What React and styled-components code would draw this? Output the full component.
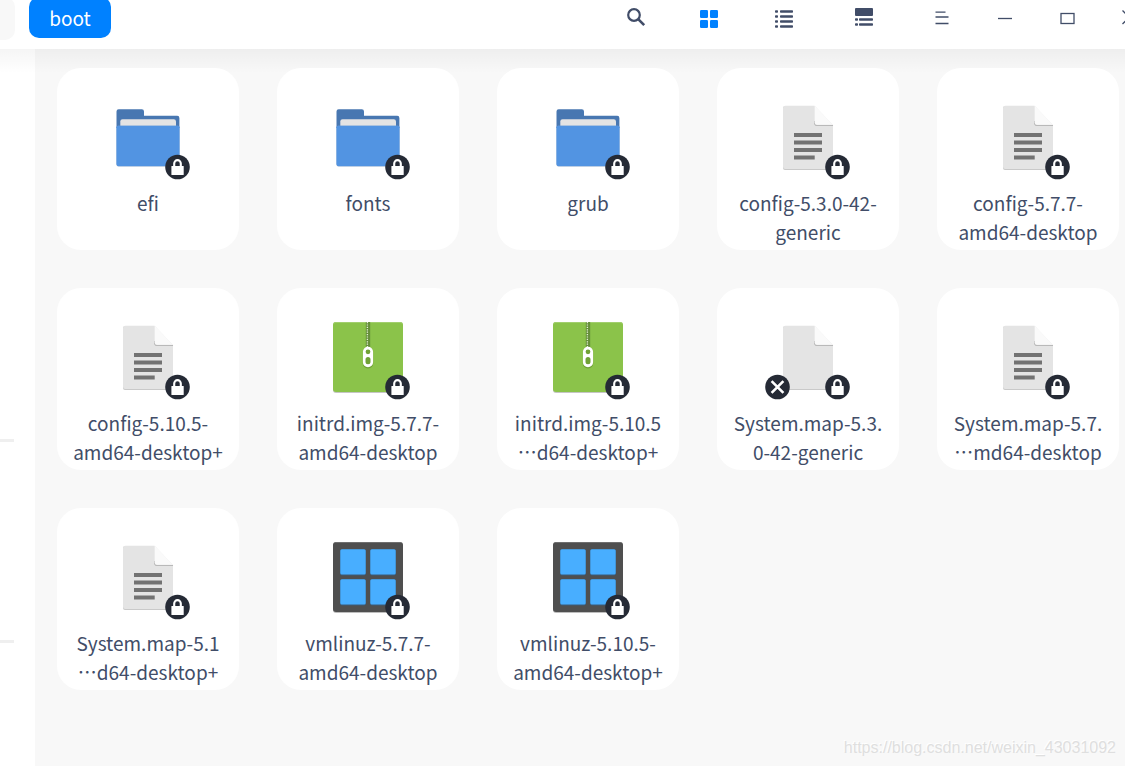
import React from "react";
import styled, { createGlobalStyle } from "styled-components";

const GlobalStyle = createGlobalStyle`
  * { box-sizing: border-box; }
  html, body, #root { height: 100%; }
  body {
    margin: 0;
    overflow: hidden;
    background: #ffffff;
    color: #414d68;
    font-family: "Noto Sans CJK SC", "Noto Sans", sans-serif;
    font-size: 19px;
  }
  button {
    border: 0;
    padding: 0;
    background: none;
    color: inherit;
    font: inherit;
    cursor: pointer;
  }
`;

const Window = styled.div`
  display: flex;
  flex-direction: column;
  min-height: 100%;
`;

const TitleBar = styled.header`
  display: flex;
  justify-content: space-between;
  height: 49px;
  flex: none;
  overflow: hidden;
  background: #ffffff;
`;

const Breadcrumbs = styled.nav`
  display: flex;
  gap: 14px;
  margin-top: -3px;
`;

const Crumb = styled.button`
  width: ${(p) => (p.$current ? "82px" : "15px")};
  height: ${(p) => (p.$current ? "41px" : "43px")};
  border-radius: ${(p) => (p.$current ? "10px" : "0 10px 10px 0")};
  background: ${(p) => (p.$current ? "#0081ff" : "#f8f8f8")};
  color: #ffffff;
`;

const Tools = styled.div`
  display: flex;
  height: 36px;
  margin-right: -36px;
`;

const ToolGroup = styled.div`
  display: flex;
  margin-right: ${(p) => (p.$spaced ? "3px" : "0")};
`;

const ToolButton = styled.button`
  display: grid;
  place-items: center;
  width: ${(p) => p.$width}px;
  color: ${(p) => (p.$active ? "#0081ff" : "#414d68")};
`;

const Body = styled.div`
  position: relative;
  display: flex;
  flex: 1;

  &::before {
    content: "";
    position: absolute;
    inset: 0 0 auto 0;
    height: 24px;
    background: linear-gradient(rgba(0, 0, 0, 0.04), rgba(0, 0, 0, 0));
    pointer-events: none;
  }
`;

const Sidebar = styled.aside`
  flex: none;
  width: 35px;
  padding-right: 21px;
  background: #ffffff;
`;

const SidebarSection = styled.div`
  height: ${(p) => p.$height}px;
  border-bottom: 3px solid #efefef;
`;

const Content = styled.main`
  flex: 1;
  padding: 19px 0 19px 22px;
  background: #f8f8f8;
`;

const FileGrid = styled.ul`
  display: grid;
  grid-template-columns: repeat(auto-fill, 182px);
  gap: 38px;
  margin: 0;
  padding: 0;
  list-style: none;
`;

const FileCard = styled.button`
  position: relative;
  z-index: 1;
  display: flex;
  flex-direction: column;
  align-items: center;
  gap: 8px;
  width: 100%;
  height: 182px;
  padding-top: 34px;
  border-radius: 24px;
  background: #ffffff;
`;

const FileName = styled.span`
  line-height: 29px;
  white-space: pre-line;
  text-align: center;
`;

const Watermark = styled.div`
  position: absolute;
  right: 9px;
  bottom: 8px;
  color: #dfdfdf;
  font-family: "Liberation Sans", sans-serif;
  font-size: 16px;
  line-height: 20px;
  text-shadow: -1px -1px 0 #ffffff;
`;

function ToolIcon({ name }) {
  return (
    <svg width="24" height="24" viewBox="0 0 24 24" fill="currentColor" aria-hidden="true">
      {name === "search" && (
        <g fill="none" stroke="currentColor">
          <circle cx="10" cy="9" r="5.8" strokeWidth="2.2" />
          <path d="M14.2 13.2L20.2 19.2" strokeWidth="2.6" />
        </g>
      )}
      {name === "grid" && (
        <>
          <rect x="3" y="4" width="8" height="8" rx="1.2" />
          <rect x="13" y="4" width="8" height="8" rx="1.2" />
          <rect x="3" y="14" width="8" height="8" rx="1.2" />
          <rect x="13" y="14" width="8" height="8" rx="1.2" />
        </>
      )}
      {name === "list" &&
        [4.2, 9.2, 14.2, 19.2].map((y) => (
          <g key={y}>
            <rect x="3" y={y} width="3" height="2.6" rx="0.8" />
            <rect x="8" y={y} width="13" height="2.6" rx="0.8" />
          </g>
        ))}
      {name === "details" && (
        <>
          <rect x="3" y="2" width="18" height="8" rx="1" />
          {[12.2, 17.2].map((y) => (
            <g key={y}>
              <rect x="3" y={y} width="3" height="2.6" rx="0.8" />
              <rect x="7" y={y} width="14" height="2.6" rx="0.8" />
            </g>
          ))}
        </>
      )}
      {name === "menu" && (
        <path d="M6.5 6.1H16.5M6.5 11H19.5M6.5 17.5H19.5" fill="none" stroke="currentColor" strokeWidth="1.3" />
      )}
      {name === "minimize" && (
        <path d="M6 12.5H20" fill="none" stroke="currentColor" strokeWidth="1.3" />
      )}
      {name === "maximize" && (
        <rect x="6" y="7.5" width="13" height="10" fill="none" stroke="currentColor" strokeWidth="1.3" />
      )}
      {name === "close" && (
        <path d="M4.5 4.5L18 18M18 4.5L4.5 18" fill="none" stroke="currentColor" strokeWidth="1.3" />
      )}
    </svg>
  );
}

function Folder() {
  return (
    <>
      <path d="M18.5 26V9.5Q18.5 7.3 20.7 7.3H43.8Q46 7.3 46 9.5V13.7H79.2Q81.4 13.7 81.4 16V26Z" fill="#4877b1" />
      <path d="M22.3 27V19.5Q22.3 17.3 24.5 17.3H75.8Q78 17.3 78 19.5V27Z" fill="#e4e4e4" />
      <path d="M18.5 25.2Q18.5 23.7 20 23.7H80Q81.5 23.7 81.5 25.2V62.4Q81.5 64.4 79.5 64.4H20.5Q18.5 64.4 18.5 62.4Z" fill="#7d9fcb" />
      <path d="M18.5 25.2Q18.5 23.7 20 23.7H80Q81.5 23.7 81.5 25.2V62Q81.5 64 79.5 64H20.5Q18.5 64 18.5 62Z" fill="#5294e2" />
    </>
  );
}

function Page({ lines }) {
  return (
    <>
      <path d="M25 6Q25 4.6 27 4.6H57L75 23.7V66Q75 68 73 68H27Q25 68 25 66Z" fill="#c9c9c9" />
      <path d="M25 6Q25 3.8 27.2 3.8H56.7L75 22.8V64.8Q75 67 72.8 67H27.2Q25 67 25 64.8Z" fill="#e4e4e4" />
      <path d="M56.7 3.4V0H78V22.8H75Z" fill="#ffffff" />
      <path d="M56.7 19V21.3Q56.7 23.5 59 23.5H75" fill="none" stroke="#b9b9b9" strokeWidth="1.2" />
      <path d="M56.7 3.8L75 22.8H59Q56.7 22.8 56.7 20.5Z" fill="#fafafa" />
      {lines && (
        <path d="M36 33H64M36 40.5H64M36 48H64M36 55.5H56.7" stroke="#727272" strokeWidth="4" />
      )}
    </>
  );
}

function Archive() {
  return (
    <>
      <rect x="15" y="1" width="70" height="70" rx="3" fill="#c5c5c5" />
      <rect x="15" y="0" width="70" height="70" rx="3" fill="#8bc34a" />
      <path d="M15 3Q15 0 18 0H82Q85 0 85 3Q85 1 82 1H18Q15 1 15 3Z" fill="#a2cf6e" />
      <rect x="47.8" y="0" width="4.4" height="27" fill="#66903a" />
      <path d="M49.4 0V26" stroke="#e7f2d9" strokeWidth="1.3" strokeDasharray="1.2 1.2" />
      <rect x="44.8" y="25.6" width="10.4" height="20.8" rx="5" fill="#70a136" />
      <path
        fillRule="evenodd"
        fill="#ffffff"
        d="M50 24.7A5.1 5.1 0 0 1 55.1 29.8V40.2A5.1 5.1 0 0 1 44.9 40.2V29.8A5.1 5.1 0 0 1 50 24.7ZM50 27.4A2.4 2.4 0 1 0 50 32.2A2.4 2.4 0 1 0 50 27.4ZM50 35A2.5 2.5 0 0 0 47.5 37.5V39.7A2.5 2.5 0 0 0 52.5 39.7V37.5A2.5 2.5 0 0 0 50 35Z"
      />
    </>
  );
}

function Executable() {
  const cells = [[22.3, 7.3], [52.3, 7.3], [22.3, 37.3], [52.3, 37.3]];
  return (
    <>
      <rect x="15" y="1" width="70" height="70" rx="3" fill="#bdbdbd" />
      <rect x="15" y="0" width="70" height="70" rx="3" fill="#4f4f4f" />
      <path d="M17 0.5H83" stroke="#6f6f6f" />
      {cells.map(([x, y]) => (
        <g key={`${x}-${y}`}>
          <rect x={x - 0.3} y={y} width="26" height="26.2" rx="2" fill="#3b5d7b" />
          <rect x={x} y={y} width="25.4" height="25.2" rx="1.5" fill="#48aeff" />
        </g>
      ))}
    </>
  );
}

function LockBadge() {
  return (
    <>
      <circle cx="79.5" cy="65" r="12.3" fill="#252a35" />
      <path d="M76.2 65.5V61.6A3.3 3.5 0 0 1 82.8 61.6V65.5" fill="none" stroke="#ffffff" strokeWidth="2.1" />
      <rect x="73.4" y="64" width="12.3" height="9" rx="0.6" fill="#ffffff" />
    </>
  );
}

function BrokenBadge() {
  return (
    <>
      <circle cx="19.5" cy="65" r="12.3" fill="#252a35" />
      <path d="M13.6 59.1L25.4 70.9M25.4 59.1L13.6 70.9" stroke="#ffffff" strokeWidth="2.6" />
    </>
  );
}

function FileIcon({ kind, broken }) {
  return (
    <svg width="100" height="78" viewBox="0 0 100 78" aria-hidden="true">
      {kind === "folder" && <Folder />}
      {kind === "text" && <Page lines />}
      {kind === "blank" && <Page />}
      {kind === "archive" && <Archive />}
      {kind === "executable" && <Executable />}
      {broken && <BrokenBadge />}
      <LockBadge />
    </svg>
  );
}

const viewTools = [
  { name: "search", label: "Search", width: 72 },
  { name: "grid", label: "Icon view", width: 74, active: true },
  { name: "list", label: "List view", width: 76 },
  { name: "details", label: "Details", width: 84 },
];

const windowTools = [
  { name: "menu", label: "Menu" },
  { name: "minimize", label: "Minimize" },
  { name: "maximize", label: "Maximize" },
  { name: "close", label: "Close" },
];

const files = [
  { kind: "folder", name: "efi" },
  { kind: "folder", name: "fonts" },
  { kind: "folder", name: "grub" },
  { kind: "text", name: "config-5.3.0-42-\ngeneric" },
  { kind: "text", name: "config-5.7.7-\namd64-desktop" },
  { kind: "text", name: "config-5.10.5-\namd64-desktop+" },
  { kind: "archive", name: "initrd.img-5.7.7-\namd64-desktop" },
  { kind: "archive", name: "initrd.img-5.10.5\n…d64-desktop+" },
  { kind: "blank", name: "System.map-5.3.\n0-42-generic", broken: true },
  { kind: "text", name: "System.map-5.7.\n…md64-desktop" },
  { kind: "text", name: "System.map-5.1\n⋯d64-desktop+" },
  { kind: "executable", name: "vmlinuz-5.7.7-\namd64-desktop" },
  { kind: "executable", name: "vmlinuz-5.10.5-\namd64-desktop+" },
];

export default function App() {
  return (
    <>
      <GlobalStyle />
      <Window lang="zh-CN">
        <TitleBar>
          <Breadcrumbs aria-label="Path">
            <Crumb aria-label="Parent folder" />
            <Crumb $current aria-current="page">boot</Crumb>
          </Breadcrumbs>
          <Tools>
            <ToolGroup $spaced>
              {viewTools.map((t) => (
                <ToolButton key={t.name} $width={t.width} $active={t.active} aria-label={t.label}>
                  <ToolIcon name={t.name} />
                </ToolButton>
              ))}
            </ToolGroup>
            <ToolGroup>
              {windowTools.map((t) => (
                <ToolButton key={t.name} $width={63} aria-label={t.label}>
                  <ToolIcon name={t.name} />
                </ToolButton>
              ))}
            </ToolGroup>
          </Tools>
        </TitleBar>
        <Body>
          <Sidebar>
            <SidebarSection $height={393} />
            <SidebarSection $height={201} />
          </Sidebar>
          <Content>
            <FileGrid>
              {files.map((f) => (
                <li key={f.name}>
                  <FileCard>
                    <FileIcon kind={f.kind} broken={f.broken} />
                    <FileName>{f.name}</FileName>
                  </FileCard>
                </li>
              ))}
            </FileGrid>
          </Content>
          <Watermark>https://blog.csdn.net/weixin_43031092</Watermark>
        </Body>
      </Window>
    </>
  );
}
